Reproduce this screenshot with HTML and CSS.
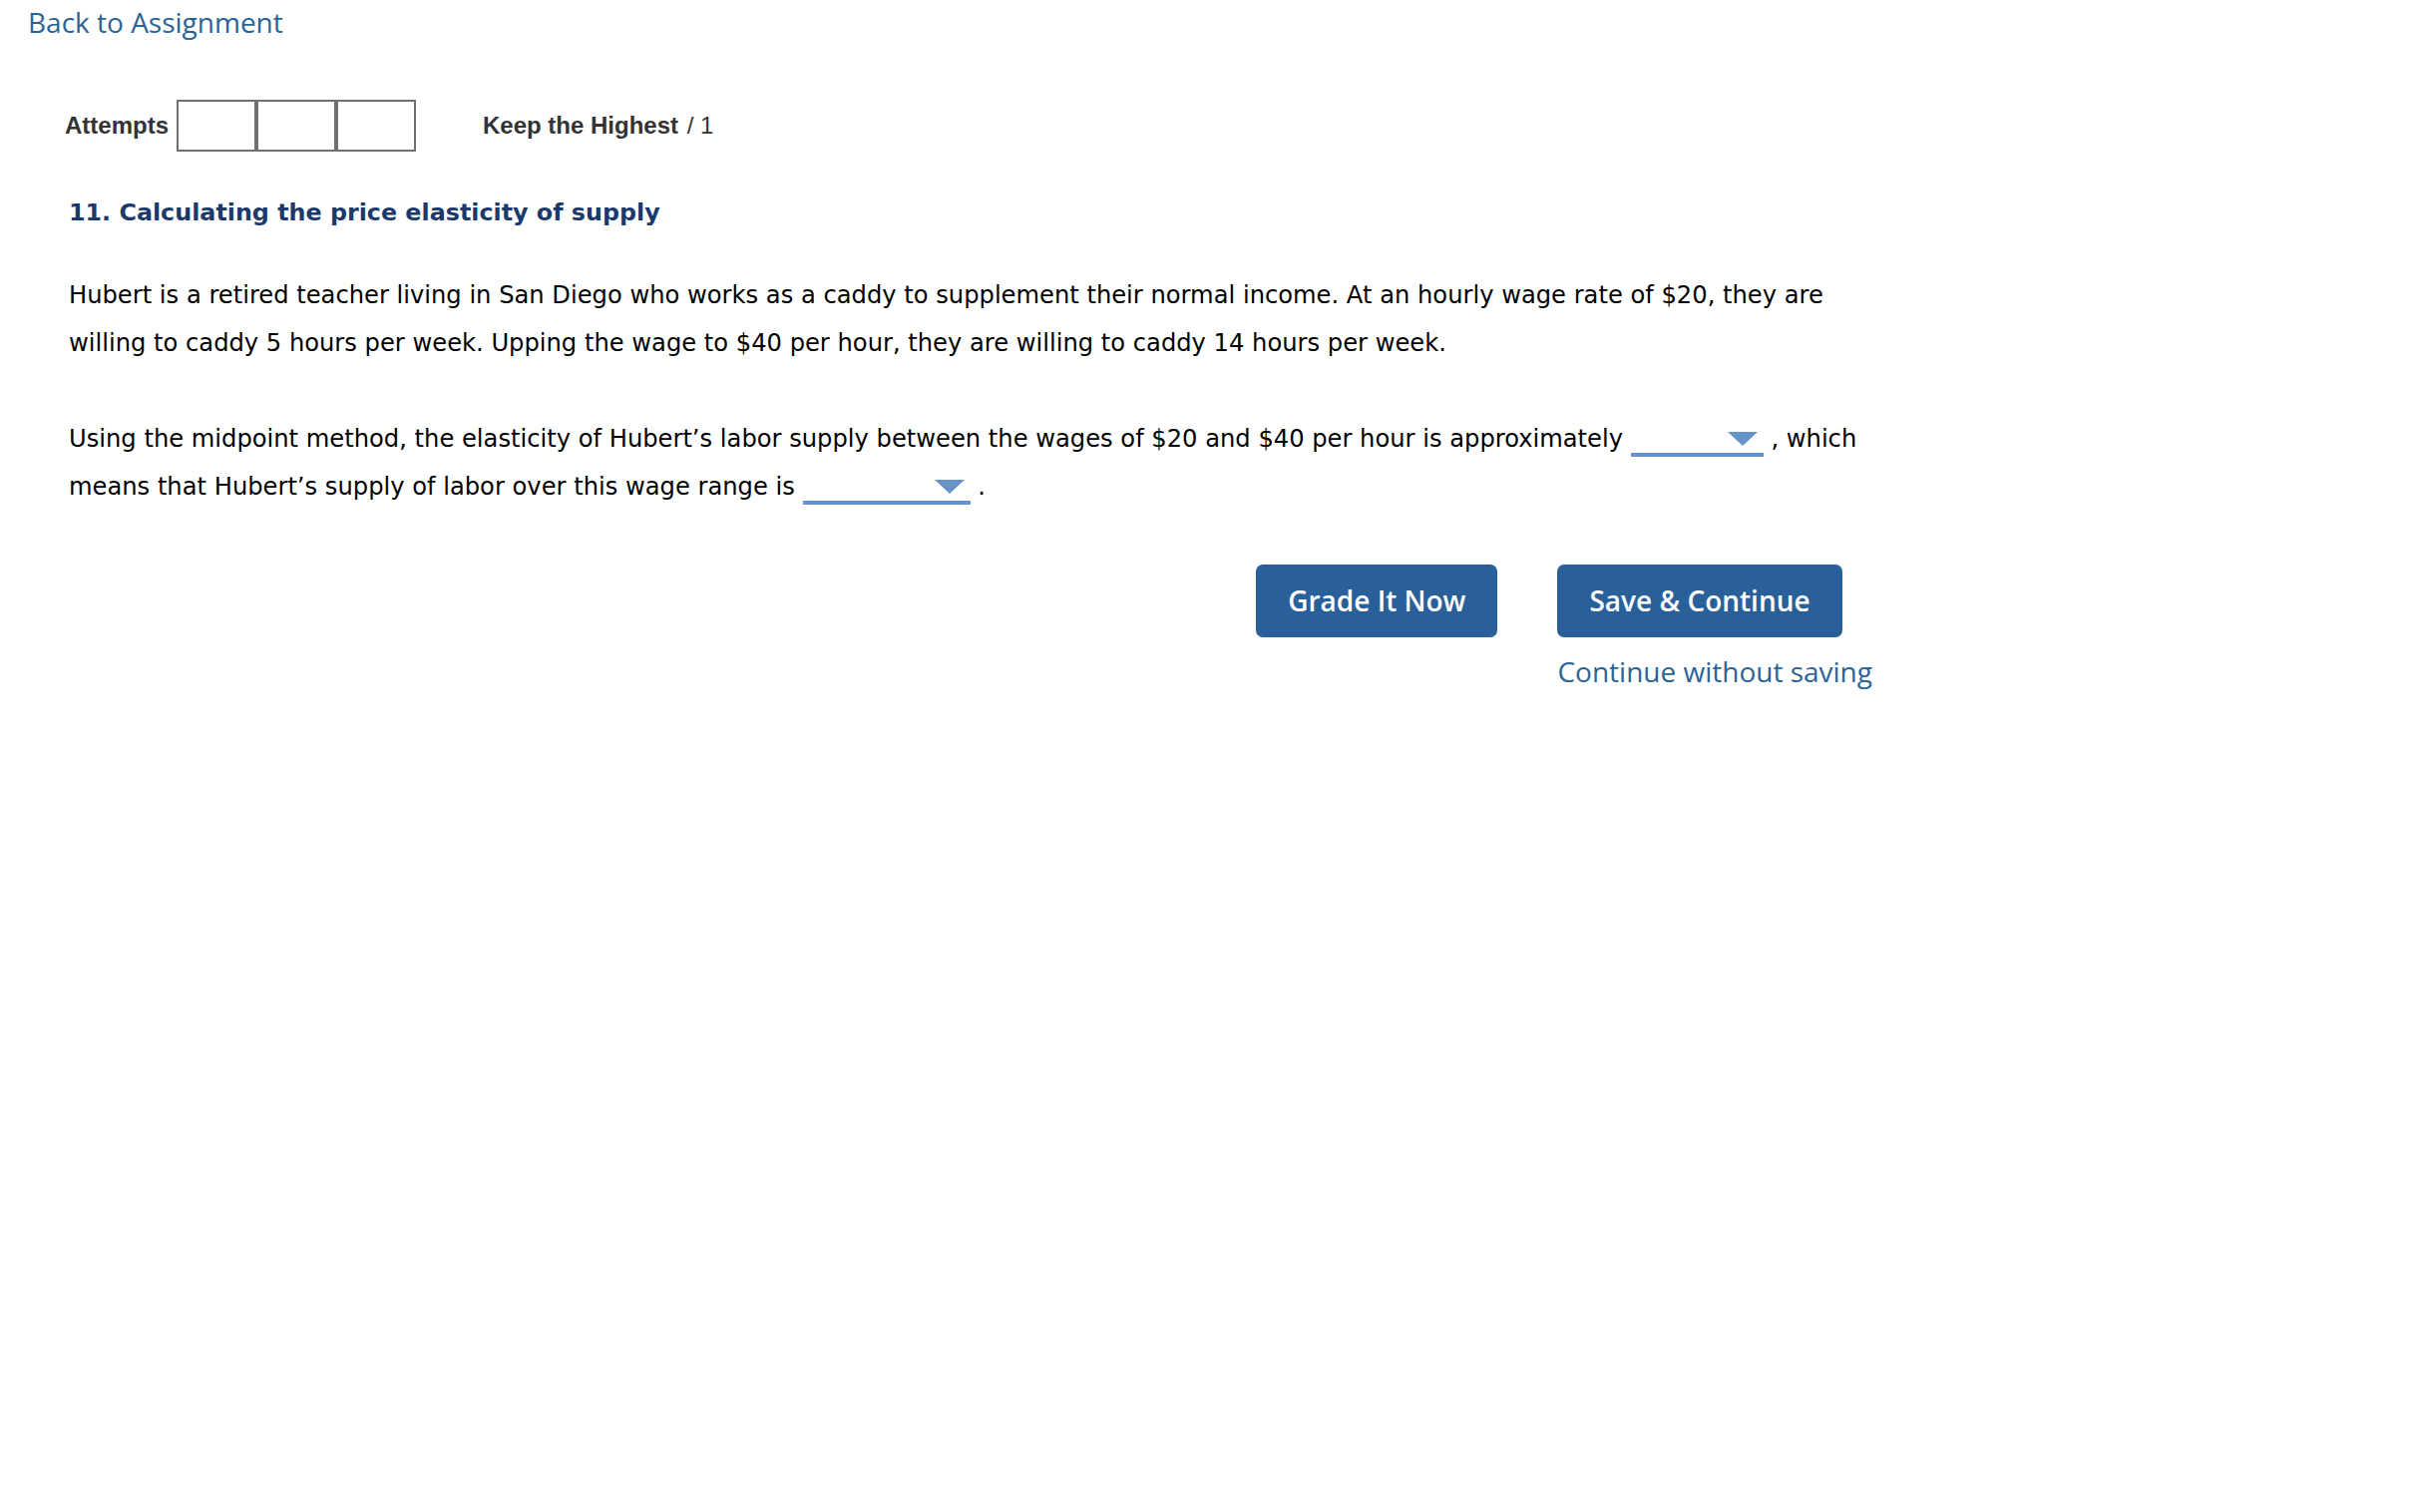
FILE: index.html
```html
<!DOCTYPE html>
<html lang="en">

<head>
    <meta charset="UTF-8">
    <meta name="viewport" content="width=device-width, initial-scale=1.0">
    <title>Calculating the price elasticity of supply</title>
    <link rel="stylesheet" href="styles.css">
</head>

<body>
    <a class="back-link" href="#">Back to Assignment</a>

    <div class="container">
        <div class="attempts-row">
            <span class="attempts-label">Attempts</span>
            <div class="attempt-boxes">
                <span class="attempt-box"></span>
                <span class="attempt-box"></span>
                <span class="attempt-box"></span>
            </div>
            <span class="score-rule"><b>Keep the Highest</b> / 1</span>
        </div>

        <h3 class="question-title">11. Calculating the price elasticity of supply</h3>

        <p class="question-text">Hubert is a retired teacher living in San Diego who works as a caddy to supplement their normal income. At an hourly wage rate of $20, they are willing to caddy 5 hours per week. Upping the wage to $40 per hour, they are willing to caddy 14 hours per week.</p>

        <p class="question-text">Using the midpoint method, the elasticity of Hubert’s labor supply between the wages of $20 and $40 per hour is approximately <span class="dropdown dropdown-short"></span> , which means that Hubert’s supply of labor over this wage range is <span class="dropdown dropdown-long"></span> .</p>

        <div class="actions">
            <button class="button">Grade It Now</button>
            <div class="action-group">
                <button class="button">Save &amp; Continue</button>
                <a class="skip-link" href="#">Continue without saving</a>
            </div>
        </div>
    </div>
</body>

</html>
```

FILE: styles.css
```css
/* General Page Styles */
body {
    margin: 0;
    padding: 0;
    background-color: #fff;
    color: #000;
    font-family: 'DejaVu Sans', Verdana, sans-serif;
}

a {
    text-decoration: none;
}

.back-link {
    display: inline-block;
    padding: 3px 0 0 28px;
    font-family: 'Open Sans', sans-serif;
    font-size: 28px;
    color: #2a6496;
}

/* Layout */
.container {
    width: 1808px;
    padding-left: 69px;
}

/* Attempts row */
.attempts-row {
    display: flex;
    align-items: center;
    margin-top: 59px;
    margin-left: -4px;
    font-family: 'Liberation Sans', Arial, sans-serif;
    font-size: 24px;
    color: #333;
}

.attempts-label {
    font-weight: bold;
    margin-right: 8px;
}

.attempt-boxes {
    display: flex;
}

.attempt-box {
    width: 80px;
    height: 52px;
    box-sizing: border-box;
    border: 2px solid #707070;
}

.score-rule {
    margin-left: 67px;
}

.score-rule b {
    margin-right: 2px;
}

/* Question */
.question-title {
    margin: 46px 0 0;
    font-size: 23.8px;
    line-height: 30px;
    color: #1b3a6b;
}

.question-text {
    margin: 44px 0 0;
    font-size: 24.2px;
    line-height: 48px;
}

.question-text + .question-text {
    margin-top: 48px;
}

.dropdown {
    position: relative;
    display: inline-block;
    height: 28px;
    box-sizing: border-box;
    border-bottom: 4px solid #6494c8;
    vertical-align: -10px;
}

.dropdown::after {
    content: "";
    position: absolute;
    top: 3px;
    right: 6px;
    border-left: 15px solid transparent;
    border-right: 15px solid transparent;
    border-top: 14px solid #6494c8;
}

.dropdown-short {
    width: 133px;
}

.dropdown-long {
    width: 168px;
}

/* Buttons */
.actions {
    display: flex;
    align-items: flex-start;
    justify-content: flex-end;
    gap: 60px;
    margin-top: 54px;
}

.action-group {
    display: flex;
    flex-direction: column;
    align-items: flex-start;
}

.button {
    padding: 17px 32px 18px;
    font-family: 'Open Sans', sans-serif;
    font-size: 28px;
    font-weight: 600;
    line-height: 38px;
    background-color: #29609a;
    color: #fff;
    border: none;
    border-radius: 7px;
    cursor: pointer;
}

.skip-link {
    margin-top: 15px;
    font-family: 'Open Sans', sans-serif;
    font-size: 28px;
    line-height: 38px;
    color: #2a6496;
}
```
